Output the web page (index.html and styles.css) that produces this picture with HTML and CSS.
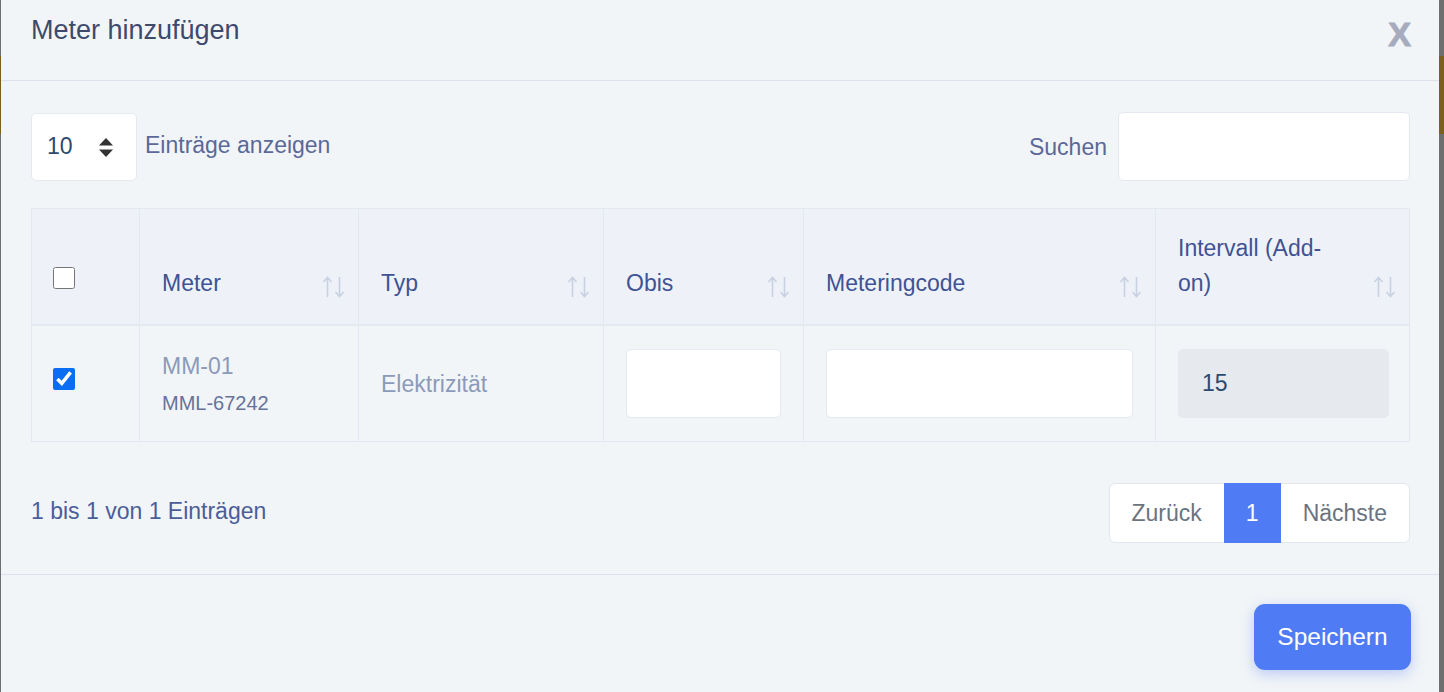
FILE: index.html
```html
<!DOCTYPE html>
<html lang="de">
<head>
    <meta charset="UTF-8">
    <meta name="viewport" content="width=device-width, initial-scale=1.0">
    <title>Meter hinzufügen</title>
    <link rel="stylesheet" href="styles.css">
</head>
<body>

    <div class="modal">
        <!-- Header -->
        <div class="modal-header">
            <h2 class="modal-title">Meter hinzufügen</h2>
            <button class="close-btn" type="button">X</button>
        </div>

        <!-- Body -->
        <div class="modal-body">
            <div class="table-controls">
                <div class="length-control">
                    <div class="length-select">
                        <span>10</span>
                        <svg width="14" height="19" viewBox="0 0 14 19">
                            <path d="M7 0 L14 7.5 L0 7.5 Z" fill="#333"/>
                            <path d="M7 19 L14 11.5 L0 11.5 Z" fill="#333"/>
                        </svg>
                    </div>
                    <label>Einträge anzeigen</label>
                </div>
                <div class="search-control">
                    <label for="search">Suchen</label>
                    <input id="search" type="text" class="form-input search-input">
                </div>
            </div>

            <table class="meter-table">
                <colgroup>
                    <col style="width: 108px">
                    <col style="width: 219px">
                    <col style="width: 245px">
                    <col style="width: 200px">
                    <col style="width: 352px">
                    <col style="width: 254px">
                </colgroup>
                <thead>
                    <tr>
                        <th class="check-cell"><input type="checkbox" class="check"></th>
                        <th>Meter<span class="sort-icon"></span></th>
                        <th>Typ<span class="sort-icon"></span></th>
                        <th>Obis<span class="sort-icon"></span></th>
                        <th>Meteringcode<span class="sort-icon"></span></th>
                        <th>Intervall (Add-on)<span class="sort-icon"></span></th>
                    </tr>
                </thead>
                <tbody>
                    <tr>
                        <td class="check-cell"><input type="checkbox" class="check" checked></td>
                        <td>
                            <div class="meter-name">MM-01</div>
                            <div class="meter-code">MML-67242</div>
                        </td>
                        <td>Elektrizität</td>
                        <td><input type="text" class="form-input cell-input"></td>
                        <td><input type="text" class="form-input cell-input"></td>
                        <td><input type="text" class="form-input cell-input readonly" value="15" readonly></td>
                    </tr>
                </tbody>
            </table>

            <div class="table-footer">
                <div class="table-info">1 bis 1 von 1 Einträgen</div>
                <div class="pagination">
                    <a class="page-link">Zurück</a>
                    <a class="page-link active">1</a>
                    <a class="page-link">Nächste</a>
                </div>
            </div>
        </div>

        <!-- Footer -->
        <div class="modal-footer">
            <button class="btn-primary" type="button">Speichern</button>
        </div>
    </div>

    <script>
        // sort arrows (up + down) in every sortable header
        const arrows = '<svg width="24" height="22" viewBox="0 0 24 22" fill="none" stroke="#c7d1e1" stroke-width="1.6">' +
            '<path d="M5.5 21 V1.5 M1.5 6 L5.5 1.5 L9.5 6"/>' +
            '<path d="M17.5 1 V20.5 M13.5 16 L17.5 20.5 L21.5 16"/></svg>';
        document.querySelectorAll('.sort-icon').forEach(el => el.innerHTML = arrows);
    </script>

</body>
</html>
```

FILE: styles.css
```css
/* --- Page behind the dialog --- */
:root {
    --modal-bg: #f2f5f7;
    --head-bg: #eef2f8;
    --line: #e3e8f1;
    --title: #3d4a6e;
    --label: #5b6898;
    --th-text: #3f5394;
    --muted: #8c9aba;
    --accent: #4f7cf5;
}

body {
    margin: 0;
    height: 692px;
    overflow: hidden;
    font-family: "Liberation Sans", Arial, Helvetica, sans-serif;
    background: linear-gradient(to bottom, #6e6e6e 56px, #7a5f1f 56px, #7a5f1f 134px, #6e6e6e 134px);
}

/* --- Modal --- */
.modal {
    width: 1438px;
    margin-left: 1px;
    min-height: 692px;
    background-color: var(--modal-bg);
}

.modal-header {
    display: flex;
    justify-content: space-between;
    align-items: flex-start;
    height: 81px;
    padding: 0 28px 0 30px;
    border-bottom: 1px solid #dde1ec;
    box-sizing: border-box;
}

.modal-title {
    margin: 11px 0 0;
    font-size: 27px;
    font-weight: normal;
    line-height: 39px;
    color: var(--title);
}

.close-btn {
    margin-top: 16px;
    padding: 0;
    border: none;
    background: none;
    font-family: "Liberation Sans", Arial, sans-serif;
    font-size: 34px;
    font-weight: bold;
    line-height: 36px;
    color: #a6acbe;
    -webkit-text-stroke: 1px #a6acbe;
    cursor: pointer;
}

.modal-body {
    padding: 31px 29px 31px 30px;
}

/* --- Length / search controls --- */
.table-controls {
    display: flex;
    justify-content: space-between;
    align-items: center;
}

.length-control,
.search-control {
    display: flex;
    align-items: center;
}

.length-select {
    display: flex;
    align-items: center;
    justify-content: space-between;
    width: 106px;
    height: 68px;
    padding: 0 23px 0 15px;
    box-sizing: border-box;
    background: #fff;
    border: 1px solid #e6e9f0;
    border-radius: 5px;
    font-size: 23px;
    color: #2b4a6f;
}

.length-select svg {
    margin-top: 1px;
}

label {
    font-size: 23px;
    color: var(--label);
}

.length-control label {
    margin-left: 8px;
    margin-top: -2px;
}

.search-control label {
    margin-right: 11px;
    margin-top: 2px;
}

.form-input {
    background: #fff;
    border: 1px solid #e4e8f0;
    border-radius: 5px;
    box-sizing: border-box;
    font-family: inherit;
    font-size: 23px;
    color: #2b4a6f;
    outline: none;
}

.search-input {
    width: 292px;
    height: 69px;
}

/* --- Table --- */
.meter-table {
    width: 1378px;
    margin-top: 27px;
    border-collapse: collapse;
    table-layout: fixed;
    border: 1px solid var(--line);
}

.meter-table th {
    position: relative;
    padding: 22px 60px 23px 22px;
    background-color: var(--head-bg);
    border: 1px solid var(--line);
    border-bottom-width: 2px;
    text-align: left;
    vertical-align: bottom;
    font-size: 23px;
    font-weight: normal;
    line-height: 35px;
    color: var(--th-text);
}

.meter-table td {
    padding: 23px 22px;
    border: 1px solid var(--line);
    vertical-align: middle;
    font-size: 23px;
    line-height: 34px;
    color: var(--muted);
}

.meter-table .check-cell {
    padding-left: 21px;
    padding-right: 0;
}

.meter-table td.check-cell {
    padding-bottom: 35px;
}

.meter-table th.check-cell {
    padding-bottom: 35px;
    line-height: 22px;
}

/* Sort arrows sit in the bottom-right corner of the header */
.sort-icon {
    position: absolute;
    right: 12px;
    bottom: 26px;
    width: 24px;
    height: 22px;
}

.sort-icon svg {
    display: block;
}

.check {
    width: 22px;
    height: 22px;
    margin: 0;
    accent-color: #0b6cf4;
    vertical-align: middle;
}

.meter-name {
    color: var(--muted);
}

.meter-code {
    margin-top: 5px;
    font-size: 20px;
    line-height: 30px;
    color: #65739a;
}

.cell-input {
    display: block;
    width: 100%;
    height: 69px;
}

.cell-input.readonly {
    width: 211px;
    padding-left: 23px;
    background-color: #e6e9ee;
    border-color: #e6e9ee;
}

/* --- Info + pagination --- */
.table-footer {
    display: flex;
    justify-content: space-between;
    align-items: center;
    margin-top: 41px;
}

.table-info {
    font-size: 23px;
    color: #4a5e9a;
    margin-top: -4px;
}

.pagination {
    display: flex;
    height: 60px;
    background: #fff;
    border: 1px solid #e2e6ee;
    border-radius: 6px;
    box-sizing: border-box;
}

.page-link {
    display: flex;
    align-items: center;
    padding: 0 22px;
    font-size: 23px;
    color: #6c7380;
    cursor: pointer;
}

.page-link.active {
    margin: -1px 0;
    background-color: var(--accent);
    color: #fff;
}

/* --- Footer --- */
.modal-footer {
    display: flex;
    justify-content: flex-end;
    padding: 29px 28px;
    border-top: 1px solid #dde1ec;
}

.btn-primary {
    width: 157px;
    height: 66px;
    border: none;
    border-radius: 11px;
    background-color: var(--accent);
    box-shadow: 0 4px 14px rgba(79, 124, 245, 0.35);
    font-family: inherit;
    font-size: 24.5px;
    color: #fff;
    cursor: pointer;
}
```
